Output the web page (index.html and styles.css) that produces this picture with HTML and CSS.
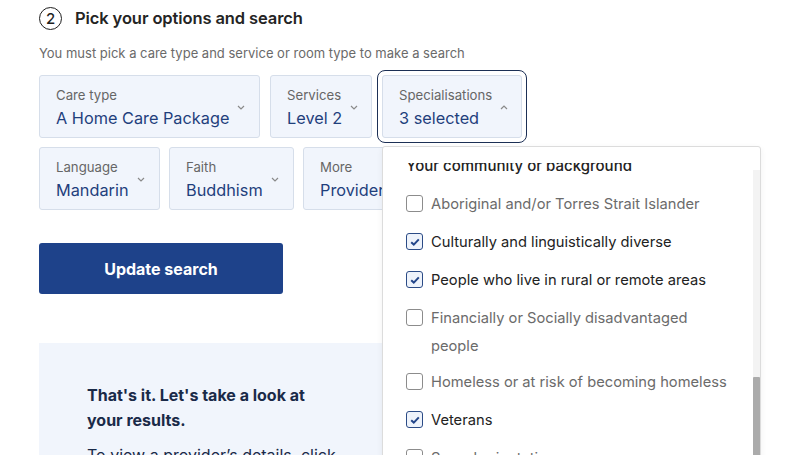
FILE: index.html
```html
<!DOCTYPE html>
<html lang="en">
<head>
<meta charset="utf-8">
<title>Pick your options and search</title>
<link rel="stylesheet" href="styles.css">
</head>
<body>
<main class="page">
  <div class="step">
    <span class="step-num">2</span>
    <h2 class="step-title">Pick your options and search</h2>
  </div>
  <p class="hint">You must pick a care type and service or room type to make a search</p>

  <div class="row row-1">
    <div class="select w-care">
      <div class="select-text">
        <span class="select-label">Care type</span>
        <span class="select-value">A Home Care Package</span>
      </div>
      <svg class="chev" width="8" height="5" viewBox="0 0 8 5"><path d="M1 1 L4 4 L7 1" fill="none" stroke="#8a8a8a" stroke-width="1.2"/></svg>
    </div>
    <div class="select w-serv">
      <div class="select-text">
        <span class="select-label">Services</span>
        <span class="select-value">Level 2</span>
      </div>
      <svg class="chev" width="8" height="5" viewBox="0 0 8 5"><path d="M1 1 L4 4 L7 1" fill="none" stroke="#8a8a8a" stroke-width="1.2"/></svg>
    </div>
    <div class="anchor">
      <div class="select focused w-spec">
        <div class="select-text">
          <span class="select-label">Specialisations</span>
          <span class="select-value">3 selected</span>
        </div>
        <svg class="chev" width="8" height="5" viewBox="0 0 8 5"><path d="M1 4 L4 1 L7 4" fill="none" stroke="#8a8a8a" stroke-width="1.2"/></svg>
      </div>
      <div class="menu">
        <div class="menu-list">
          <div class="menu-head">Your community or background</div>
          <label class="opt"><span class="box"></span><span class="opt-text">Aboriginal and/or Torres Strait Islander</span></label>
          <label class="opt on"><span class="box"><svg width="10" height="8" viewBox="0 0 10 8"><path d="M1.2 4.2 L3.8 6.6 L8.8 1.4" fill="none" stroke="#23468a" stroke-width="2"/></svg></span><span class="opt-text">Culturally and linguistically diverse</span></label>
          <label class="opt on"><span class="box"><svg width="10" height="8" viewBox="0 0 10 8"><path d="M1.2 4.2 L3.8 6.6 L8.8 1.4" fill="none" stroke="#23468a" stroke-width="2"/></svg></span><span class="opt-text">People who live in rural or remote areas</span></label>
          <label class="opt two"><span class="box"></span><span class="opt-text">Financially or Socially disadvantaged people</span></label>
          <label class="opt"><span class="box"></span><span class="opt-text">Homeless or at risk of becoming homeless</span></label>
          <label class="opt on"><span class="box"><svg width="10" height="8" viewBox="0 0 10 8"><path d="M1.2 4.2 L3.8 6.6 L8.8 1.4" fill="none" stroke="#23468a" stroke-width="2"/></svg></span><span class="opt-text">Veterans</span></label>
          <label class="opt"><span class="box"></span><span class="opt-text">Sexual orientation</span></label>
        </div>
        <div class="track"><div class="thumb"></div></div>
      </div>
    </div>
  </div>

  <div class="row row-2">
    <div class="select w-lang">
      <div class="select-text">
        <span class="select-label">Language</span>
        <span class="select-value">Mandarin</span>
      </div>
      <svg class="chev" width="8" height="5" viewBox="0 0 8 5"><path d="M1 1 L4 4 L7 1" fill="none" stroke="#8a8a8a" stroke-width="1.2"/></svg>
    </div>
    <div class="select w-faith">
      <div class="select-text">
        <span class="select-label">Faith</span>
        <span class="select-value">Buddhism</span>
      </div>
      <svg class="chev" width="8" height="5" viewBox="0 0 8 5"><path d="M1 1 L4 4 L7 1" fill="none" stroke="#8a8a8a" stroke-width="1.2"/></svg>
    </div>
    <div class="select">
      <div class="select-text">
        <span class="select-label">More</span>
        <span class="select-value">Provider type</span>
      </div>
      <svg class="chev" width="8" height="5" viewBox="0 0 8 5"><path d="M1 1 L4 4 L7 1" fill="none" stroke="#8a8a8a" stroke-width="1.2"/></svg>
    </div>
  </div>

  <button class="btn" type="button">Update search</button>

  <section class="panel">
    <h3 class="panel-title">That's it. Let's take a look at your results.</h3>
    <p class="panel-text">To view a provider’s details, click on their name.</p>
  </section>
</main>
</body>
</html>
```

FILE: styles.css
```css
* { box-sizing: border-box; }
html, body { margin: 0; padding: 0; background: #fff; }
body {
  font-family: Inter, "Noto Sans", "Liberation Sans", sans-serif;
  color: #222;
  overflow: hidden;
  height: 455px;
}
.page { padding: 6px 0 0 39px; }

.step { display: flex; align-items: center; gap: 13px; height: 24px; }
.step-num {
  width: 23px; height: 23px;
  border: 1.8px solid #1f1f1f;
  border-radius: 50%;
  display: flex; align-items: center; justify-content: center;
  font-size: 15px; font-weight: 500; line-height: 1;
  color: #1f1f1f;
}
.step-title { margin: 0; font-size: 16.5px; font-weight: 600; color: #242424; letter-spacing: -0.1px; }

.hint { margin: 14px 0 0; font-size: 13px; line-height: 18px; color: #6a6a6a; }

.row { display: flex; gap: 10px; }
.row-1 { margin-top: 13px; }
.row-2 { margin-top: 9px; gap: 9px; }

.select {
  height: 63px;
  display: flex; align-items: center; gap: 8px;
  padding: 2px 16px 0 16px;
  background: #f1f5fc;
  border: 1px solid #d6deea;
  border-radius: 3px;
}
.w-care { width: 221px; }
.w-serv { width: 102px; }
.w-spec { width: 140px; }
.w-lang { width: 121px; }
.w-faith { width: 125px; }
.select-text { display: flex; flex-direction: column; }
.select-label { font-size: 13.2px; line-height: 20px; color: #666; white-space: nowrap; }
.select-value { font-size: 16.3px; line-height: 26px; color: #1f3f7c; white-space: nowrap; }
.chev { flex: none; margin-top: -1px; }

.anchor { position: relative; }
.focused { outline: 1px solid #1c2f55; outline-offset: 4px; }

.menu {
  position: absolute;
  top: 71px; left: 0;
  width: 379px; height: 340px;
  background: #fff;
  border: 1px solid #dcdcdc;
  border-radius: 3px;
  box-shadow: 0 2px 6px rgba(0,0,0,0.06);
  z-index: 10;
  display: flex;
  padding-top: 16px;
}
.menu-list { flex: 1; overflow: hidden; padding-left: 23px; }
.menu-head {
  margin-top: -11px;
  font-size: 15px; line-height: 28px; font-weight: 500; color: #222;
  margin-bottom: 10px;
}
.opt { display: flex; align-items: flex-start; gap: 8px; margin-bottom: 10px; }
.opt.two { margin-bottom: 8px; }
.box {
  flex: none;
  width: 17px; height: 17px;
  margin-top: 5px;
  border: 1.3px solid #8c8c8c;
  border-radius: 3px;
  background: #fff;
  display: flex; align-items: center; justify-content: center;
}
.opt.on .box { border-color: #2b4b86; background: #eef3fb; }
.opt-text { font-size: 14.7px; line-height: 28px; color: #6b6b6b; max-width: 300px; }
.opt.on .opt-text { color: #222; }

.track { width: 7px; margin-top: 7px; background: #f3f3f3; flex: none; }
.thumb { margin-top: 207px; height: 200px; background: #ababab; border-radius: 1px; }

.btn {
  display: block;
  margin-top: 33px;
  width: 244px; height: 51px;
  background: #1e428a;
  border: 0; border-radius: 3px;
  color: #fff;
  font-family: inherit;
  font-size: 16px; font-weight: 700;
}

.panel {
  margin-top: 49px;
  width: 680px;
  background: #f1f5fc;
  padding: 40px 48px 0;
  height: 200px;
}
.panel-title { margin: 0; max-width: 240px; font-size: 16px; line-height: 25px; font-weight: 700; color: #1a2a48; }
.panel-text { margin: 10px 0 0; font-size: 16px; line-height: 25px; color: #1a2a48; max-width: 260px; }
```
